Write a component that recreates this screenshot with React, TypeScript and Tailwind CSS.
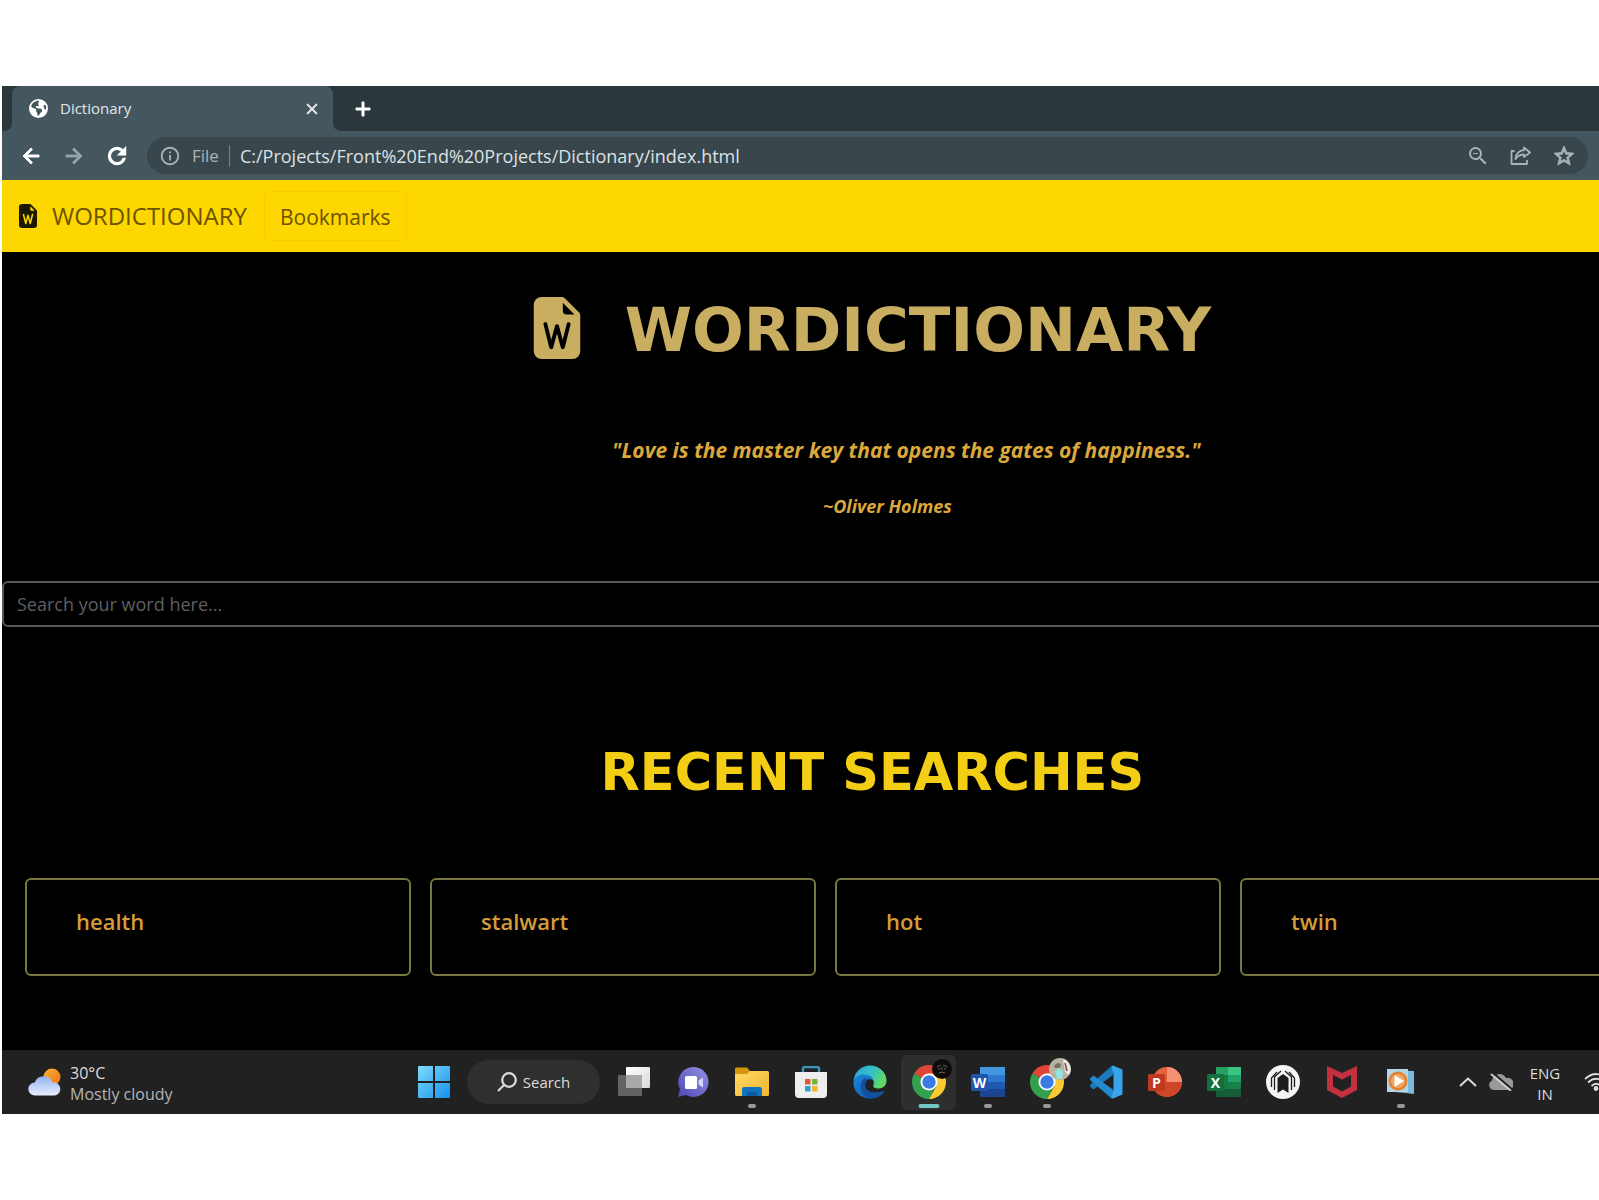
import type { ReactNode } from "react";
import { MdArrowBack, MdArrowForward, MdRefresh, MdInfoOutline, MdStarBorder, MdZoomOut, MdClose, MdAdd } from "react-icons/md";
import { FaEarthAmericas } from "react-icons/fa6";
import { BsFileEarmarkWordFill } from "react-icons/bs";

const recent = ["health", "stalwart", "hot", "twin"];

function ShareIcon() {
  return (
    <svg viewBox="0 0 22 22" className="size-[22px]" fill="none" stroke="currentColor" strokeWidth="1.8" strokeLinejoin="round">
      <path d="M4.5 6H1.5V19H17V15" />
      <path d="M14 2.500L20 7.500L14 12V9.500C10 9.500 7.500 11 5.500 14C6 9 8.500 5.500 14 5.200Z" />
    </svg>
  );
}

function BrowserChrome() {
  return (
    <header>
      <div className="flex h-[45px] items-stretch bg-[#2c373c]">
        <div className="flex w-[10px] bg-[#44575f]">
          <div className="grow rounded-br-lg bg-[#2c373c]" />
        </div>
        <div className="flex w-[321px] items-center rounded-t-lg bg-[#44575f] pr-3 pl-[17px] text-[#e1e6e8]">
          <FaEarthAmericas className="size-[19px] text-white" />
          <span className="ml-[12px] text-[15px] font-medium">Dictionary</span>
          <button type="button" aria-label="Close tab" className="ml-auto">
            <MdClose className="size-[18px] stroke-1 [&>path:first-child]:stroke-none" />
          </button>
        </div>
        <div className="flex grow bg-[#44575f]">
          <div className="flex grow items-center rounded-bl-lg bg-[#2c373c] pl-[18px] text-white">
            <button type="button" aria-label="New tab">
              <MdAdd className="size-6 stroke-1 [&>path:first-child]:stroke-none" />
            </button>
          </div>
        </div>
      </div>
      <div className="flex h-[49px] items-center bg-[#44575f] pr-[11px] pl-[17px]">
        <button type="button" aria-label="Back" className="text-white">
          <MdArrowBack className="size-6 stroke-1 [&>path:first-child]:stroke-none" />
        </button>
        <button type="button" aria-label="Forward" className="ml-[19px] text-[#96a2a7]">
          <MdArrowForward className="size-6 stroke-1 [&>path:first-child]:stroke-none" />
        </button>
        <button type="button" aria-label="Reload" className="ml-[18px] text-white">
          <MdRefresh className="size-[26px] stroke-1 [&>path:first-child]:stroke-none" />
        </button>
        <div className="ml-[17px] flex h-[37px] grow items-center rounded-full bg-[#39464c] pr-[12px] pl-[12px] text-[#a9b2b6]">
          <MdInfoOutline className="size-[22px]" />
          <span className="ml-[11px] text-[17px]">File</span>
          <span className="mx-[10px] h-[22px] w-px bg-[#76848a]" />
          <input
            aria-label="Address"
            defaultValue="C:/Projects/Front%20End%20Projects/Dictionary/index.html"
            className="min-w-0 grow bg-transparent text-lg text-[#dbe2e5] outline-none"
          />
          <div className="flex items-center gap-[20px]">
            <button type="button" aria-label="Zoom">
              <MdZoomOut className="size-6" />
            </button>
            <button type="button" aria-label="Share">
              <ShareIcon />
            </button>
            <button type="button" aria-label="Bookmark this page">
              <MdStarBorder className="size-6 stroke-1 [&>path:first-child]:stroke-none" />
            </button>
          </div>
        </div>
      </div>
    </header>
  );
}

function TaskItem({ label, mark, children }: { label: string; mark?: "open" | "active"; children: ReactNode }) {
  return (
    <button
      type="button"
      aria-label={label}
      className={
        mark === "active"
          ? "relative mx-[2px] flex h-[55px] w-[55px] shrink-0 items-center justify-center rounded-md bg-[#2e2e2e]"
          : "relative flex h-[55px] w-[59px] shrink-0 items-center justify-center"
      }
    >
      {children}
      {mark === "open" && <span className="absolute bottom-[2px] left-1/2 h-[4px] w-[8px] -translate-x-1/2 rounded-full bg-[#9a9a9a]" />}
      {mark === "active" && <span className="absolute bottom-[2px] left-1/2 h-[4px] w-[21px] -translate-x-1/2 rounded-full bg-[#73c5c6]" />}
    </button>
  );
}

function WeatherIcon() {
  return (
    <svg viewBox="0 0 34 28" className="h-[28px] w-[34px]">
      <defs>
        <linearGradient id="sun" x1="0" y1="0" x2="1" y2="1">
          <stop offset="0" stopColor="#fbb034" />
          <stop offset="1" stopColor="#ee7318" />
        </linearGradient>
        <linearGradient id="cloud" x1="0" y1="0" x2="0" y2="1">
          <stop offset="0" stopColor="#8fb4f2" />
          <stop offset="1" stopColor="#e8eefc" />
        </linearGradient>
      </defs>
      <circle cx="24" cy="9" r="8.500" fill="url(#sun)" />
      <path d="M7 27.500a6.500 6.500 0 0 1-.3-13A9.500 9.500 0 0 1 24.500 14.500a6.600 6.600 0 0 1 2.500 13Z" fill="url(#cloud)" />
    </svg>
  );
}

function WindowsIcon() {
  return (
    <svg viewBox="0 0 32 32" className="size-8">
      <defs>
        <linearGradient id="win" x1="0" y1="0" x2="1" y2="1">
          <stop offset="0" stopColor="#7fdcfb" />
          <stop offset="1" stopColor="#1391ee" />
        </linearGradient>
      </defs>
      <path d="M1 0H15V15H0V1A1 1 0 0 1 1 0ZM17 0H31A1 1 0 0 1 32 1V15H17ZM0 17H15V32H1A1 1 0 0 1 0 31ZM17 17H32V31A1 1 0 0 1 31 32H17Z" fill="url(#win)" />
    </svg>
  );
}

function TaskViewIcon() {
  return (
    <svg viewBox="0 0 34 30" className="h-[30px] w-[34px]">
      <defs>
        <linearGradient id="tv" x1="0" y1="0" x2="1" y2="1">
          <stop offset="0" stopColor="#ffffff" />
          <stop offset="1" stopColor="#d8d8d8" />
        </linearGradient>
      </defs>
      <rect x="1" y="8" width="24" height="21" rx="1" fill="#636363" />
      <rect x="9" y="0" width="24" height="21" rx="1" fill="url(#tv)" />
      <path d="M9 8H25V21H9Z" fill="#a9a9a9" />
    </svg>
  );
}

function ChatIcon() {
  return (
    <svg viewBox="0 0 32 32" className="size-8">
      <defs>
        <linearGradient id="chat" x1="1" y1="0" x2="0" y2="1">
          <stop offset="0" stopColor="#9692e4" />
          <stop offset="1" stopColor="#4c47b5" />
        </linearGradient>
      </defs>
      <path d="M16.500 1A15 15 0 1 1 9 29L1 31L3 23A15 15 0 0 1 16.500 1Z" fill="url(#chat)" />
      <rect x="8" y="10" width="12" height="13" rx="1.500" fill="#fff" />
      <path d="M21.500 14.500L26 11.500V21.500L21.500 18.500Z" fill="#d9d8ff" />
    </svg>
  );
}

function FolderIcon() {
  return (
    <svg viewBox="0 0 34 30" className="h-[30px] w-[34px]">
      <defs>
        <linearGradient id="fold" x1="0" y1="0" x2="1" y2="1">
          <stop offset="0" stopColor="#ffd965" />
          <stop offset="1" stopColor="#f2b630" />
        </linearGradient>
      </defs>
      <path d="M0 2A1.500 1.500 0 0 1 1.500.5H12L15 4V9H0Z" fill="#d8950f" />
      <path d="M0 7H12L15 4H32.500A1.500 1.500 0 0 1 34 5.500V27.500A1.500 1.500 0 0 1 32.500 29H1.500A1.500 1.500 0 0 1 0 27.500Z" fill="url(#fold)" />
      <path d="M7 29V22A2 2 0 0 1 9 20H25A2 2 0 0 1 27 22V29Z" fill="#1272bd" />
      <path d="M12 25H22V29H12Z" fill="#0b5b9e" />
    </svg>
  );
}

function StoreIcon() {
  return (
    <svg viewBox="0 0 32 32" className="size-8">
      <path d="M8 8V2.500A1.500 1.500 0 0 1 9.500 1H22.500A1.500 1.500 0 0 1 24 2.500V8" fill="none" stroke="#3c95bd" strokeWidth="2.400" />
      <path d="M0 6H32V28A4 4 0 0 1 28 32H4A4 4 0 0 1 0 28Z" fill="#eeeeee" />
      <path d="M10 13H15.500V18.500H10Z" fill="#e0583a" />
      <path d="M17 13H22.500V18.500H17Z" fill="#79b33b" />
      <path d="M10 20H15.500V25.500H10Z" fill="#2f9fd8" />
      <path d="M17 20H22.500V25.500H17Z" fill="#f0b52c" />
    </svg>
  );
}

function EdgeIcon() {
  return (
    <svg viewBox="0 0 34 34" className="size-[34px]">
      <defs>
        <linearGradient id="edgeTop" x1="0" y1="0" x2="1" y2=".4">
          <stop offset="0" stopColor="#2aa6df" />
          <stop offset=".6" stopColor="#35c1c4" />
          <stop offset="1" stopColor="#62d95e" />
        </linearGradient>
        <linearGradient id="edgeLow" x1="0" y1="0" x2="1" y2="1">
          <stop offset="0" stopColor="#1b8ade" />
          <stop offset="1" stopColor="#0d4fa0" />
        </linearGradient>
      </defs>
      <path d="M.5 15.500C1.500 7 8.500.5 17 .5C26.500.5 33.500 7.500 33.500 15.500C33.500 20.500 30 23.500 25.500 23.500C21.500 23.500 19.500 22 20.500 20C21.500 17 20.500 13.500 17 12C11 9.500 3.500 11 .5 15.500Z" fill="url(#edgeTop)" />
      <path d="M.5 17C1 11.500 6 9.500 11 9.500C15.500 9.500 20 12 20.500 16C18 12.500 12 14 12 20C12 26 19 29.500 28.500 26.500C31 25.500 31.500 26 30.500 27.500C27.500 31.500 22.500 33.500 17 33.500C7.500 33.500 0 26.500.5 17Z" fill="url(#edgeLow)" />
      <path d="M11 13.500C5.500 18 6.500 29 16 33.400C22.500 33.800 27.500 31.500 30.500 27.500C31.500 26 31 25.500 28.500 26.500C19 29.500 12 26 12 20C12 17 13.500 15 15.500 14Z" fill="#11519c" />
    </svg>
  );
}

function ChromeIcon() {
  return (
    <svg viewBox="0 0 34 34" className="size-[34px]">
      <path d="M17 17L2.300 8.500A17 17 0 0 1 31.700 8.500Z" fill="#df4637" />
      <path d="M17 17L2.300 8.500A17 17 0 0 0 17 34L24 21Z" fill="#34a04f" />
      <path d="M17 8.500H31.700A17 17 0 0 1 17 34L24.400 21.200Z" fill="#f8cb35" />
      <circle cx="17" cy="17" r="8.500" fill="#fff" />
      <circle cx="17" cy="17" r="6.700" fill="#3b7be6" />
    </svg>
  );
}

function OfficeLetter({ letter }: { letter: string }) {
  return (
    <text x="8.500" y="20.500" fontSize="14" fontWeight="700" fill="#fff" textAnchor="middle" fontFamily="Open Sans, sans-serif">
      {letter}
    </text>
  );
}

function WordIcon() {
  return (
    <svg viewBox="0 0 34 30" className="h-[30px] w-[34px]">
      <path d="M9 0H34V8H9Z" fill="#4397e0" />
      <path d="M9 8H34V15H9Z" fill="#2d78cc" />
      <path d="M9 15H34V22H9Z" fill="#2159b0" />
      <path d="M9 22H34V30H9Z" fill="#1b4590" />
      <rect x="0" y="7" width="17" height="17" rx="1.500" fill="#1f54a8" />
      <OfficeLetter letter="W" />
    </svg>
  );
}

function ExcelIcon() {
  return (
    <svg viewBox="0 0 34 30" className="h-[30px] w-[34px]">
      <path d="M9 0H22V8H9Z" fill="#27a063" />
      <path d="M21 0H34V8H21Z" fill="#38c481" />
      <path d="M9 8H22V22H9Z" fill="#187a43" />
      <path d="M21 8H34V15H21Z" fill="#25a066" />
      <path d="M21 15H34V22H21Z" fill="#1a8049" />
      <path d="M9 22H34V30H9Z" fill="#155c37" />
      <rect x="0" y="7" width="17" height="17" rx="1.500" fill="#12703d" />
      <OfficeLetter letter="X" />
    </svg>
  );
}

function PowerPointIcon() {
  return (
    <svg viewBox="0 0 34 30" className="h-[30px] w-[34px]">
      <circle cx="19" cy="15" r="15" fill="#e5623f" />
      <path d="M19 0A15 15 0 0 1 34 15H19Z" fill="#f59072" />
      <path d="M4 15H34A15 15 0 0 1 4 15Z" fill="#cf4528" />
      <rect x="0" y="7" width="17" height="17" rx="1.500" fill="#bd3a20" />
      <OfficeLetter letter="P" />
    </svg>
  );
}

function CodeIcon() {
  return (
    <svg viewBox="0 0 34 34" className="size-[34px]">
      <path d="M24 .5V10L4.500 24.500L1 21.500V20L22.500 1Z" fill="#1c79bb" />
      <path d="M1 13.500L4.500 10.500L24 24.500V33.500H22.500L1 15Z" fill="#2489ce" />
      <path d="M24 .5L33.500 4.500V29.500L24 33.500L22.500 32L24.500 25V9L22.500 2Z" fill="#38a4ea" />
    </svg>
  );
}

function TunnelIcon() {
  return (
    <svg viewBox="0 0 34 34" className="size-[34px]">
      <circle cx="17" cy="17" r="17" fill="#f5f5f5" />
      <path d="M11.500 28V13L17 9L22.500 13V28L17 24.500Z" fill="#1d1d1d" />
      <path d="M8.500 25V12L15 6M5.500 22V13L11 7M25.500 25V12L19 6M28.500 22V13L23 7" fill="none" stroke="#1d1d1d" strokeWidth="1.300" />
    </svg>
  );
}

function ShieldIcon() {
  return (
    <svg viewBox="0 0 30 32" className="h-[32px] w-[30px]">
      <path d="M0 0L15 7L30 0V24L15 32L0 24ZM6 9V20.500L15 25.500L24 20.500V9L15 13.500Z" fill="#c2313d" fillRule="evenodd" />
    </svg>
  );
}

function MediaIcon() {
  return (
    <svg viewBox="0 0 28 26" className="h-[26px] w-[28px]">
      <path d="M1 1L27 2V25L19 24L1 22.500Z" fill="#7db9dc" />
      <path d="M0 0H21V23H0Z" fill="#b3d5e6" />
      <circle cx="11" cy="12" r="9.500" fill="#e7812c" />
      <circle cx="11" cy="12" r="7" fill="#f0a664" />
      <path d="M7.500 6V18L17 12Z" fill="#fff" />
    </svg>
  );
}

function Taskbar() {
  return (
    <footer className="flex h-[64px] items-center overflow-hidden bg-[#212121] text-[#dcdcdc]">
      <div className="flex w-[402px] shrink-0 items-center pl-[26px]">
        <WeatherIcon />
        <div className="ml-[8px] pt-[3px] text-base leading-[21px]">
          <p>30°C</p>
          <p className="text-[#b4b4b4]">Mostly cloudy</p>
        </div>
      </div>
      <TaskItem label="Start"><WindowsIcon /></TaskItem>
      <button type="button" className="mx-[4px] flex h-[44px] w-[133px] shrink-0 items-center justify-center gap-[6px] rounded-full bg-[#2f2f2f] text-[15px] font-medium">
        <svg viewBox="0 0 20 20" className="size-5" fill="none" stroke="currentColor" strokeWidth="2.200">
          <circle cx="12" cy="8" r="6.800" />
          <path d="M7 13L1 19" />
        </svg>
        Search
      </button>
      <TaskItem label="Task view"><TaskViewIcon /></TaskItem>
      <TaskItem label="Chat"><ChatIcon /></TaskItem>
      <TaskItem label="File Explorer" mark="open"><FolderIcon /></TaskItem>
      <TaskItem label="Store"><StoreIcon /></TaskItem>
      <TaskItem label="Edge"><EdgeIcon /></TaskItem>
      <TaskItem label="Chrome" mark="active">
        <ChromeIcon />
        <svg viewBox="0 0 20 20" className="absolute top-[4px] right-[4px] size-5">
          <circle cx="10" cy="10" r="10" fill="#0d0c0b" />
          <path d="M5 8L9 6M11 6L15 8M6 10H8M12 10H14M7 14Q10 12 13 14M10 8V11" fill="none" stroke="#6d6359" strokeWidth="1" />
        </svg>
      </TaskItem>
      <TaskItem label="Word" mark="open"><WordIcon /></TaskItem>
      <TaskItem label="Chrome, second profile" mark="open">
        <ChromeIcon />
        <svg viewBox="0 0 22 22" className="absolute top-[3px] right-[5px] size-[22px]">
          <circle cx="11" cy="11" r="11" fill="#b9b2a2" />
          <path d="M14 1A11 11 0 0 1 20 17L16 14Z" fill="#efe9e4" />
          <path d="M16 5L18 13" stroke="#7b4a4a" strokeWidth="1.500" />
          <path d="M5 8Q8 3 12 6L11 10H6Z" fill="#77735f" />
          <path d="M6 13L10 10L14 13L13 21H8Z" fill="#8fe6df" />
        </svg>
      </TaskItem>
      <TaskItem label="Code"><CodeIcon /></TaskItem>
      <TaskItem label="PowerPoint"><PowerPointIcon /></TaskItem>
      <TaskItem label="Excel"><ExcelIcon /></TaskItem>
      <TaskItem label="Tunnel"><TunnelIcon /></TaskItem>
      <TaskItem label="Antivirus"><ShieldIcon /></TaskItem>
      <TaskItem label="Media player" mark="open"><MediaIcon /></TaskItem>
      <button type="button" aria-label="Show hidden icons" className="ml-[29px] shrink-0">
        <svg viewBox="0 0 18 10" className="h-[10px] w-[18px]" fill="none" stroke="currentColor" strokeWidth="2">
          <path d="M1 9L9 1.500L17 9" />
        </svg>
      </button>
      <svg viewBox="0 0 24 18" className="ml-[12px] h-[18px] w-[24px] shrink-0">
        <path d="M5 17A5 5 0 0 1 3 7.500A7.500 7.500 0 0 1 17 5A6 6 0 0 1 20 17Z" fill="#9a9a9a" />
        <path d="M4 0L24 17" stroke="#212121" strokeWidth="2" />
        <path d="M2 1L22 18" stroke="#cfcfcf" strokeWidth="1.800" />
      </svg>
      <div className="ml-[15px] w-[34px] shrink-0 pt-[3px] text-center text-[15px] leading-[21px] font-medium">
        <p>ENG</p>
        <p>IN</p>
      </div>
      <svg viewBox="0 0 24 18" className="ml-[22px] h-[18px] w-[24px] shrink-0" fill="none" stroke="currentColor" strokeWidth="1.800">
        <path d="M1 6Q12 -4 23 6M4 9.500Q12 2 20 9.500M7.500 13Q12 8.500 16.500 13" />
        <circle cx="12" cy="15.500" r="1.500" fill="currentColor" />
      </svg>
    </footer>
  );
}

export default function App() {
  return (
    <div className="min-h-screen overflow-hidden bg-white pt-[86px] pl-[2px] font-['Open_Sans','Noto_Sans',sans-serif]">
      <BrowserChrome />
      <nav className="flex h-[72px] items-center bg-[#fed700] pl-[14px] text-[#6b5300]">
        <a href="#" className="flex items-center text-2xl">
          <BsFileEarmarkWordFill className="size-6 text-[#1d1800]" />
          <span className="ml-[12px]">WORDICTIONARY</span>
        </a>
        <button type="button" className="ml-[17px] h-[50px] rounded-md border border-[#f7cd00] px-[15px] pt-[4px] text-[21px]">
          Bookmarks
        </button>
      </nav>
      <main className="overflow-hidden bg-black">
        <div className="w-[109%]">
          <h1 className="flex items-center justify-center gap-[37px] pt-[39px] pr-[8px] font-['DejaVu_Sans',sans-serif] text-[61px] leading-[70px] font-bold text-[#c9ae62]">
            <BsFileEarmarkWordFill className="size-[62px]" />
            <span className="pt-[4px]">WORDICTIONARY</span>
          </h1>
          <p className="mt-[70px] pl-[68px] text-center text-[21px] leading-[30px] font-bold text-[#dba83b] italic">
            "Love is the master key that opens the gates of happiness."
          </p>
          <p className="mt-[28px] pl-[30px] text-center text-lg leading-[26px] font-bold text-[#dba83b] italic">~Oliver Holmes</p>
          <input
            type="text"
            aria-label="Search word"
            placeholder="Search your word here..."
            className="mt-[62px] block h-[46px] w-full rounded-md border-2 border-[#5a5a5a] bg-transparent px-[13px] text-lg text-gray-300 placeholder:text-[#5f5f63]"
          />
          <h2 className="mt-[111px] text-center font-['DejaVu_Sans',sans-serif] text-[51px] leading-[70px] font-bold text-[#f3ce14]">
            RECENT SEARCHES
          </h2>
          <ul className="mt-[70px] flex gap-[19px] pb-[74px] pl-[23px]">
            {recent.map((word) => (
              <li key={word} className="h-[98px] w-[386px] shrink-0 rounded-md border-2 border-[#77773f] pt-[23px] pl-[49px] text-[22px] leading-[36px] font-semibold text-[#d69b3a]">
                {word}
              </li>
            ))}
          </ul>
        </div>
      </main>
      <Taskbar />
    </div>
  );
}
